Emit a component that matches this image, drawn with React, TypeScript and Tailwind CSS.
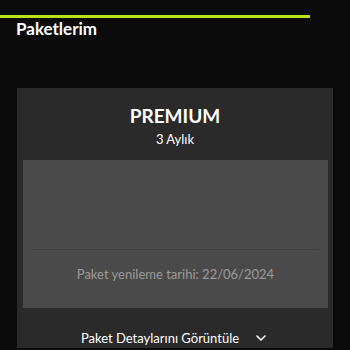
import { ChevronDown } from 'lucide-react'

const font = { fontFamily: 'Lato, "Noto Sans", sans-serif' }

const App = () => {
  return (
    <div className="w-[350px] h-[350px] overflow-hidden bg-[#0b0b0b] text-white" style={font}>
      <div className="pt-[15px]">
        <div className="h-[3px] w-[310px] bg-[#b9e21c]" />
      </div>
      <h1 className="px-[16px] text-[17px] font-bold leading-[22px]">Paketlerim</h1>

      <div className="mt-[48px] mx-[17px] bg-[#2a2a2a] flex flex-col items-center">
        <div className="pt-[16px] text-[19px] font-bold leading-[24px]">PREMIUM</div>
        <div className="mt-[3px] text-[13px] leading-[17px]">3 Aylık</div>

        <div className="mt-[12px] w-[305px] ml-[6px] self-start bg-[#4a4a4a] h-[148px] flex flex-col">
          <div className="h-[89px]" />
          <div className="mx-[9px] h-px bg-[#404040]" />
          <div className="mt-[15px] text-center text-[13px] leading-[18px] text-[#9b9b9b]">
            Paket yenileme tarihi: 22/06/2024
          </div>
        </div>

        <div className="mt-[20px] flex items-center gap-[14px] text-[13px] leading-[20px]">
          <span>Paket Detaylarını Görüntüle</span>
          <ChevronDown size={16} strokeWidth={2.4} />
        </div>
      </div>
    </div>
  )
}

export default App
